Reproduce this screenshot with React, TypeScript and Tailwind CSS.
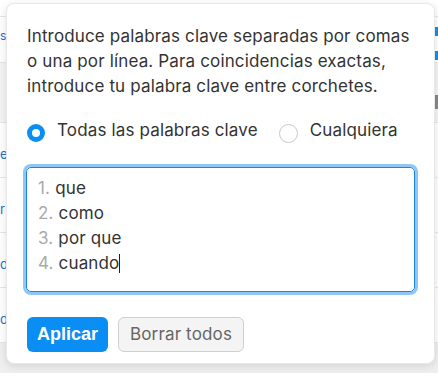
import React from "react";

export default function App() {
  const lines = [
    ["1.", "que"],
    ["2.", "como"],
    ["3.", "por que"],
    ["4.", "cuando"],
  ];
  return (
    <div className="relative w-[438px] h-[373px] overflow-hidden bg-white" style={{ fontFamily: "Inter, 'Noto Sans', sans-serif" }}>
      {/* background table */}
      <div className="flex flex-col w-full h-full">
        <div className="h-[17px] border-b border-[#e6e6e6]"></div>
        <div className="h-[45px] relative">
          <span className="absolute left-0 top-[10px] text-[12px] text-[#1a73c8]">s</span>
          <div className="absolute right-0 top-[10px] w-[4px] h-[9px] bg-[#1a8be8]"></div>
          <div className="absolute right-0 top-[34px] w-[4px] h-[9px] bg-[#1a8be8]"></div>
        </div>
        <div className="h-[61px] bg-[#f4f4f4] border-y border-[#e6e6e6] relative">
          <div className="absolute right-0 top-[32px] w-[3px] h-[14px] bg-[#888]"></div>
        </div>
        <div className="h-[55px] border-b border-[#e6e6e6] relative">
          <span className="absolute left-0 top-[22px] text-[13px] text-[#1a73c8]">e</span>
        </div>
        <div className="h-[55px] border-b border-[#e6e6e6] relative">
          <span className="absolute left-0 top-[22px] text-[13px] text-[#1a73c8]">r</span>
        </div>
        <div className="h-[55px] border-b border-[#e6e6e6] relative">
          <span className="absolute left-0 top-[22px] text-[13px] text-[#1a73c8]">d</span>
        </div>
        <div className="h-[55px] border-b border-[#e6e6e6] relative">
          <span className="absolute left-0 top-[22px] text-[13px] text-[#1a73c8]">d</span>
        </div>
        <div className="flex-1 bg-[#efefef]"></div>
      </div>

      {/* popup */}
      <div className="absolute left-[6px] top-[3px] w-[429px] h-[361px] bg-white rounded-[8px] border border-[#e8e8e8] shadow-[0_2px_8px_rgba(0,0,0,0.12)] px-[20px] pt-[20px]">
        <p className="text-[17px] leading-[25px] text-[#333] tracking-[0.15px]">
          Introduce palabras clave separadas por comas o una por línea. Para coincidencias exactas, introduce tu palabra clave entre corchetes.
        </p>
        <div className="flex items-center mt-[19px] h-[25px] text-[17px] tracking-[0.15px] text-[#333]">
          <span className="mt-[5px] w-[18px] h-[18px] rounded-full border-[5px] border-[#0b8ef3] bg-white"></span>
          <span className="ml-[12px]">Todas las palabras clave</span>
          <span className="mt-[5px] ml-[21px] w-[19px] h-[19px] rounded-full border border-[#c8c8c8] bg-white"></span>
          <span className="ml-[12px]">Cualquiera</span>
        </div>
        <div className="mt-[24px] ml-[-1px] w-[389px] h-[125px] rounded-[5px] border border-[#1f84dc] ring-[3px] ring-[#8fc6f5] px-[11px] pt-[8px] text-[17px] tracking-[0.15px] leading-[25px]">
          {lines.map(([n, t], i) => (
            <div key={i} className="flex">
              <span className="text-[#aaaaaa]">{n}</span>
              <span className="ml-[5px] text-[#333]">{t}</span>
              {i === 3 && <span className="w-[1px] h-[19px] mt-[3px] bg-[#222]"></span>}
            </div>
          ))}
        </div>
        <div className="flex gap-[10px] mt-[25px]">
          <button className="w-[81px] h-[35px] rounded-[6px] bg-[#0b8ef3] text-white text-[18px] font-bold" style={{ fontFamily: "'Liberation Sans', Arial, sans-serif" }}>
            Aplicar
          </button>
          <button className="w-[126px] h-[35px] rounded-[6px] bg-[#f4f4f4] border border-[#cfcfcf] text-[#666] text-[17px] tracking-[0.15px]">
            Borrar todos
          </button>
        </div>
      </div>
    </div>
  );
}
